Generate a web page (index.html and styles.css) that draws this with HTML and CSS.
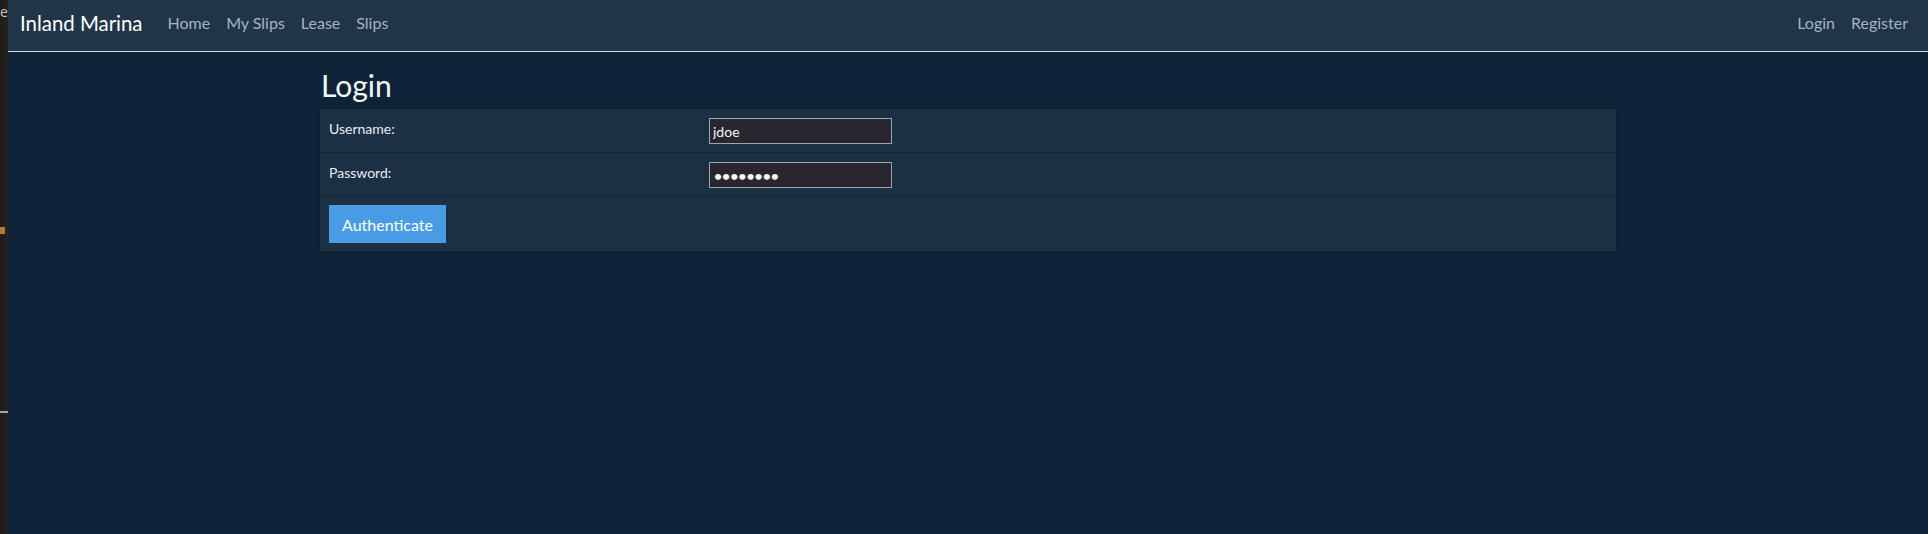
FILE: index.html
```html
<!DOCTYPE html>
<html lang="en">
<head>
<meta charset="utf-8">
<title>Login - Inland Marina</title>
<link rel="stylesheet" href="styles.css">
</head>
<body>
<div class="screen">
  <div class="edge">
    <span class="edge-char">e</span>
    <span class="edge-mark"></span>
    <span class="edge-line"></span>
  </div>
  <div class="page">
    <nav class="navbar">
      <a class="brand" href="#">Inland Marina</a>
      <ul class="nav">
        <li><a class="nav-link" href="#">Home</a></li>
        <li><a class="nav-link" href="#">My Slips</a></li>
        <li><a class="nav-link" href="#">Lease</a></li>
        <li><a class="nav-link" href="#">Slips</a></li>
      </ul>
      <ul class="nav nav-right">
        <li><a class="nav-link" href="#">Login</a></li>
        <li><a class="nav-link" href="#">Register</a></li>
      </ul>
    </nav>
    <main class="container">
      <h1 class="title">Login</h1>
      <form class="login-form">
        <table class="form-table">
          <colgroup><col class="col-label"><col></colgroup>
          <tr>
            <td class="label-cell"><label for="user">Username:</label></td>
            <td class="field-cell"><input id="user" class="field" type="text" value="jdoe"></td>
          </tr>
          <tr>
            <td class="label-cell"><label for="pass">Password:</label></td>
            <td class="field-cell"><input id="pass" class="field field-secret" type="password" value="password"></td>
          </tr>
          <tr>
            <td class="button-cell" colspan="2"><button class="btn" type="button">Authenticate</button></td>
          </tr>
        </table>
      </form>
    </main>
  </div>
</div>
</body>
</html>
```

FILE: styles.css
```css
* { box-sizing: border-box; }
html, body { margin: 0; padding: 0; }
body {
  background: #0f2338;
  font-family: Lato, "Liberation Sans", sans-serif;
  color: #eef2f6;
  overflow: hidden;
}
.screen {
  display: flex;
  min-height: 534px;
}
.edge {
  width: 8px;
  flex: none;
  background: linear-gradient(to right, #1f1c19, #26211c);
  display: flex;
  flex-direction: column;
  overflow: hidden;
}
.edge-char {
  display: block;
  margin: 3px 0 0 0;
  font-family: "Open Sans", sans-serif;
  font-size: 14px;
  line-height: 18px;
  color: #c4c4c4;
}
.edge-mark {
  display: block;
  width: 5px;
  height: 7px;
  margin-top: 206px;
  background: #b27a2c;
}
.edge-line {
  display: block;
  width: 8px;
  height: 2px;
  margin-top: 177px;
  background: #a4a4a4;
}
.page {
  flex: 1;
  min-width: 0;
}
.navbar {
  display: flex;
  align-items: flex-start;
  height: 52px;
  padding: 0 12px;
  background: #213549;
  border-bottom: 1px solid #d4e2ee;
}
.brand {
  margin-top: 8px;
  margin-right: 17px;
  color: #ffffff;
  text-decoration: none;
  font-size: 20.4px;
  line-height: 30px;
}
.nav {
  display: flex;
  list-style: none;
  margin: 11px 0 0;
  padding: 0;
}
.nav-right { margin-left: auto; }
.nav-link {
  display: block;
  padding: 0 8px;
  font-size: 16px;
  line-height: 24px;
  color: #a6b3c1;
  text-decoration: none;
}
.container {
  width: 1296px;
  margin: 0 auto;
}
.title {
  margin: 15px 0 6px 1px;
  font-size: 30px;
  font-weight: 400;
  line-height: 36px;
  color: #f3f6f9;
}
.login-form { margin: 0; }
.form-table {
  width: 100%;
  border-collapse: collapse;
  box-shadow: 0 0 4px rgba(6, 18, 30, 0.5);
}
.col-label { width: 380px; }
.form-table td {
  background: #1c3043;
  border-bottom: 1px solid #0f2236;
  vertical-align: top;
  padding: 9px 8px 8px 9px;
}
.form-table .button-cell { padding: 8px 8px 8px 9px; }
.label-cell {
  font-size: 14px;
  line-height: 21px;
  color: #e6edf4;
}
.field {
  display: block;
  width: 183px;
  height: 26px;
  margin: 0;
  padding: 0 3px;
  background: #29262f;
  border: 1px solid #9ca6b3;
  border-radius: 0;
  color: #f4f4f4;
  font-family: Lato, "Liberation Sans", sans-serif;
  font-size: 14px;
  outline: none;
}
.field-secret {
  font-weight: 700;
  padding-left: 4px;
}
.btn {
  display: block;
  height: 38px;
  padding: 0 13px;
  background: #499be6;
  border: none;
  border-radius: 0;
  color: #ffffff;
  font-family: Lato, "Liberation Sans", sans-serif;
  font-size: 16px;
  cursor: pointer;
}
```
